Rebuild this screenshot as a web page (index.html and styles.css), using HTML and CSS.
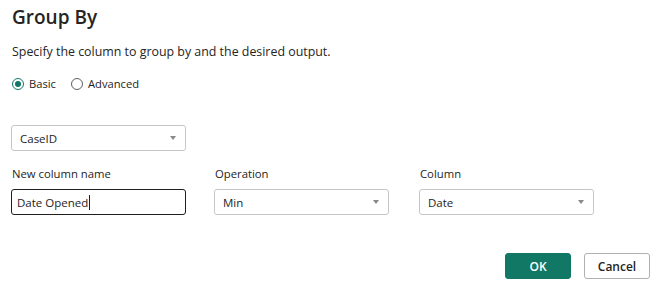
FILE: index.html
```html
<!DOCTYPE html>
<html lang="en">
<head>
    <meta charset="UTF-8">
    <meta name="viewport" content="width=device-width, initial-scale=1.0">
    <title>Group By</title>
    <link rel="stylesheet" href="styles.css">
</head>
<body>
    <div id="dialog">
        <h1>Group By</h1>
        <p class="intro">Specify the column to group by and the desired output.</p>
        <div class="modes">
            <label class="radio"><span class="dot checked"></span>Basic</label>
            <label class="radio"><span class="dot"></span>Advanced</label>
        </div>
        <div class="select groupcol">
            <span>CaseID</span>
            <span class="caret"></span>
        </div>
        <div class="fields">
            <div class="field">
                <label>New column name</label>
                <div class="textbox"><span>Date Opened</span><span class="cursor"></span></div>
            </div>
            <div class="field">
                <label>Operation</label>
                <div class="select"><span>Min</span><span class="caret"></span></div>
            </div>
            <div class="field">
                <label>Column</label>
                <div class="select"><span>Date</span><span class="caret"></span></div>
            </div>
        </div>
        <div class="actions">
            <button class="primary">OK</button>
            <button class="secondary">Cancel</button>
        </div>
    </div>
</body>
</html>
```

FILE: styles.css
```css
body {
    font-family: "Open Sans", "Noto Sans", sans-serif;
    background-color: #ffffff;
    color: #252423;
    margin: 0;
    padding: 0;
}
#dialog {
    width: 668px;
    height: 291px;
    box-sizing: border-box;
    padding: 4px 18px 0 11px;
}
h1 {
    font-size: 19px;
    font-weight: 600;
    line-height: 26px;
    margin: 0 0 0 1px;
}
.intro {
    font-size: 12.4px;
    line-height: 16px;
    margin: 14px 0 0 1px;
}
.modes {
    display: flex;
    gap: 15px;
    margin: 16px 0 0 1px;
    font-size: 11.2px;
    line-height: 16px;
}
.radio {
    display: flex;
    align-items: center;
    gap: 5px;
}
.dot {
    width: 10px;
    height: 10px;
    border: 1px solid #605e5c;
    border-radius: 50%;
    position: relative;
}
.dot.checked {
    border-color: #117865;
}
.dot.checked::after {
    content: "";
    position: absolute;
    left: 2px;
    top: 2px;
    width: 6px;
    height: 6px;
    border-radius: 50%;
    background-color: #117865;
}
.select, .textbox {
    box-sizing: border-box;
    height: 26px;
    border: 1px solid #c8c6c4;
    border-radius: 3px;
    display: flex;
    align-items: center;
    justify-content: space-between;
    padding: 0 9px 0 8px;
    font-size: 11.5px;
}
.groupcol {
    width: 175px;
    margin-top: 33px;
}
.caret {
    width: 0;
    height: 0;
    border-left: 3.5px solid transparent;
    border-right: 3.5px solid transparent;
    border-top: 4px solid #8a8886;
}
.fields {
    display: flex;
    gap: 29px;
    margin-top: 15px;
}
.field {
    width: 175px;
    display: flex;
    flex-direction: column;
}
.field label {
    font-size: 11.3px;
    line-height: 16px;
    margin: 0 0 7px 1px;
}
.field:nth-child(2) {
    margin-left: -1px;
}
.field:nth-child(3) {
    margin-left: 1px;
}
.textbox {
    border-color: #201f1e;
    justify-content: flex-start;
    padding-left: 5px;
}
.cursor {
    width: 1px;
    height: 15px;
    background-color: #201f1e;
    margin-left: 1px;
}
.actions {
    display: flex;
    justify-content: flex-end;
    gap: 13px;
    margin-top: 38px;
}
button {
    font-family: inherit;
    font-size: 12px;
    font-weight: 600;
    height: 26px;
    width: 66px;
    border-radius: 3px;
    cursor: pointer;
}
.primary {
    background-color: #117865;
    color: #ffffff;
    border: 1px solid #117865;
}
.secondary {
    background-color: #ffffff;
    color: #252423;
    border: 1px solid #b3b0ad;
}
```
